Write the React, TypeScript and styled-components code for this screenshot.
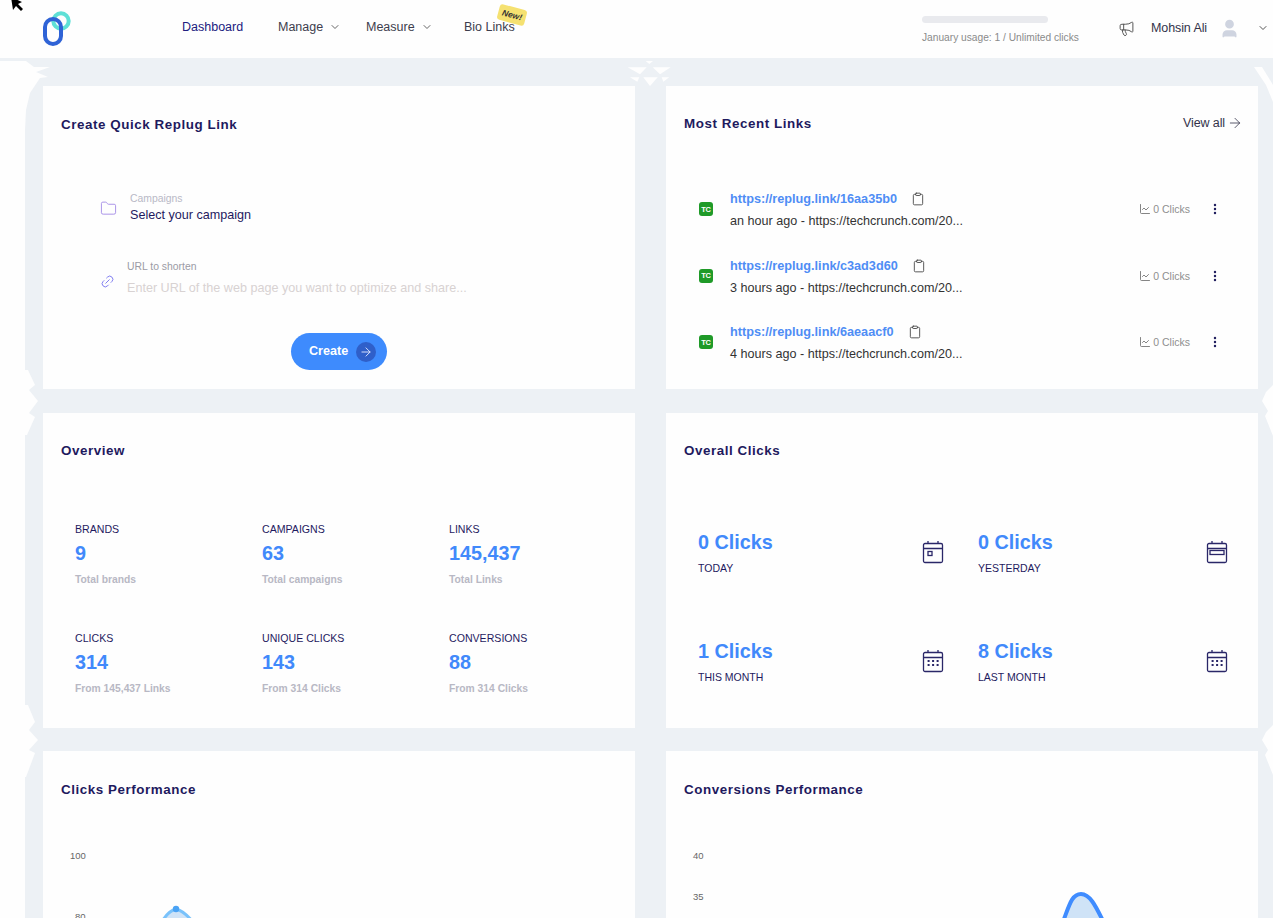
import React from "react";
import styled, { createGlobalStyle } from "styled-components";
import { ArrowRight, ChartLine, ChevronDown, Clipboard, EllipsisVertical, Folder, Link2, Megaphone, User } from "lucide-react";

const Global = createGlobalStyle`
  html, body { margin: 0; padding: 0; background: #fefefe; overflow: hidden; }
  body { font-family: "Liberation Sans", Arial, sans-serif; color: #1f1a5c; }
`;
const Page = styled.div`position: relative; height: 918px; overflow: hidden; background: #fefefe;`;
const Header = styled.header`display: flex; align-items: center; height: 58px; padding-left: 43px; padding-right: 4px; box-sizing: border-box;`;
const Logo = styled.svg`width: 28px; height: 35px; margin-top: -1px; flex: none;`;
const Nav = styled.nav`display: flex; align-items: center; margin-left: 111px; height: 100%; padding-bottom: 4px; box-sizing: border-box;`;
const NavItem = styled.a<{ $w: number; $active?: boolean }>`
  position: relative; display: flex; align-items: center; width: ${p => p.$w}px; font-size: 12.5px;
  color: ${p => (p.$active ? "#21207f" : "#3d3d4d")}; white-space: nowrap;
  svg { margin-left: 6px; color: #666; }
`;
const NewBadge = styled.span`
  position: absolute; left: 34px; top: -13px; padding: 3px 4px; border-radius: 3px; background: #f5e171; color: #333;
  font-size: 8.5px; font-weight: 700; font-style: italic; transform: rotate(15deg);
`;
const RightBlock = styled.div`display: flex; align-items: center; margin-left: auto; height: 100%; padding-bottom: 2px; box-sizing: border-box;`;
const Usage = styled.div`width: 178px; padding-top: 2px; margin-right: 18px;`;
const UsageBar = styled.div`width: 126px; height: 7px; border-radius: 4px; background: #e9eaee; margin-bottom: 9px;`;
const UsageText = styled.div`font-size: 10.2px; color: #8a8a8a; white-space: nowrap;`;
const UserName = styled.span`font-size: 12.5px; color: #33334a; margin-left: 16px; margin-right: 12px; letter-spacing: -.1px;`;
const Band = styled.div`height: 3px; background: #edf1f5;`;
const Main = styled.main`
  margin-left: 25px; padding: 25px 15px 0 18px; background: #edf1f5; height: 860px; box-sizing: border-box;
  display: grid; grid-template-columns: 592px 592px; grid-template-rows: 304px 315px 1fr; column-gap: 31px; row-gap: 23px;
`;
const Card = styled.section<{ $short?: boolean }>`
  background: #fefefe; padding: 0 18px; min-width: 0; ${p => (p.$short ? "height: 303px;" : "")}
`;
const CardHead = styled.div<{ $h?: number }>`display: flex; align-items: center; justify-content: space-between; height: ${p => p.$h ?? 76}px;`;
const Title = styled.h2`margin: 0; font-size: 13.4px; font-weight: 700; color: #1e1a5e; letter-spacing: .55px;`;
const ViewAll = styled.a`display: flex; align-items: center; font-size: 12.5px; color: #33334a; margin-right: -3px; gap: 2px; letter-spacing: -.1px;`;
const FormRow = styled.div<{ $ml: number; $gap: number; $top: number }>`
  display: flex; align-items: center; margin-left: ${p => p.$ml}px; margin-top: ${p => p.$top}px; gap: ${p => p.$gap}px;
`;
const FieldText = styled.div`display: flex; flex-direction: column;`;
const FieldLabel = styled.label<{ $dark?: boolean }>`font-size: 10.4px; line-height: 14px; color: ${p => (p.$dark ? "#9b9ba5" : "#b9b9c6")};`;
const FieldValue = styled.div`font-size: 12.6px; line-height: 18px; color: #1e1a5e;`;
const Placeholder = styled.div`font-size: 12.6px; line-height: 28px; color: #d8d2d2; white-space: nowrap;`;
const ButtonRow = styled.div`display: flex; justify-content: center; margin-top: 31px;`;
const CreateButton = styled.button`
  display: flex; align-items: center; justify-content: space-between; width: 96px; height: 37px; padding: 0 11px 2px 18px; box-sizing: border-box;
  border: 0; border-radius: 19px; background: #3e8bfd; color: #fff; font: 700 12.6px "Liberation Sans", Arial, sans-serif;
`;
const ButtonCircle = styled.span`display: flex; align-items: center; justify-content: center; width: 20px; height: 20px; border-radius: 50%; margin-top: 2px; background: #2f5fc9;`;
const LinkList = styled.div`display: flex; flex-direction: column; gap: 22.5px; padding-top: 27px;`;
const LinkRow = styled.div`display: flex; align-items: center; height: 44px; padding-left: 15px;`;
const Favicon = styled.span`
  display: flex; align-items: center; justify-content: center; width: 14px; height: 14px; border-radius: 3px; background: #1f9a28;
  color: #fff; font-size: 7.5px; font-weight: 700; flex: none; margin-right: 17px; letter-spacing: -.3px;
`;
const LinkBody = styled.div`flex: 1; min-width: 0; padding-top: 2px;`;
const LinkTop = styled.div`display: flex; align-items: center; height: 22px;`;
const LinkUrl = styled.a`font-size: 12.7px; font-weight: 700; color: #4f8df5;`;
const CopyBtn = styled.span`display: flex; margin-left: 14px; color: #444;`;
const LinkSub = styled.div`font-size: 12.6px; line-height: 22px; color: #333;`;
const ClickCount = styled.span`display: flex; align-items: center; gap: 2px; font-size: 10.5px; color: #8f8f8f; margin-right: 18px; svg { color: #666; }`;
const Kebab = styled.span`display: flex; width: 14px; margin-right: 18px; color: #22205f;`;
const StatGrid = styled.div`display: grid; grid-template-columns: repeat(3, 187px); grid-template-rows: 109px 109px; padding: 35px 0 0 14px;`;
const Stat = styled.div`display: flex; flex-direction: column;`;
const StatLabel = styled.div`font-size: 10.6px; line-height: 14px; color: #1e1a5e; text-transform: uppercase;`;
const StatValue = styled.div`font-size: 19.8px; font-weight: 700; line-height: 34px; color: #4189fb;`;
const StatSub = styled.div`font-size: 10.3px; line-height: 20px; color: #b8b8c4; font-weight: 700;`;
const ClicksGrid = styled.div`display: grid; grid-template-columns: 280px 250px; grid-template-rows: 109px 109px; padding: 39px 0 0 14px;`;
const ClickItem = styled.div`display: flex; align-items: flex-start; justify-content: space-between;`;
const ClickText = styled.div`display: flex; flex-direction: column;`;
const ClickValue = styled.div`font-size: 19.8px; font-weight: 700; line-height: 32px; color: #4189fb;`;
const ClickLabel = styled.div`font-size: 10.5px; line-height: 20px; color: #1e1a5e; text-transform: uppercase;`;
const ClickIcon = styled.svg<{ $mr: number }>`width: 22px; height: 24px; margin-top: 14px; margin-right: ${p => p.$mr}px; flex: none;`;
const Chart = styled.svg`display: block; margin: 0 -18px; width: 592px; height: 140px;`;
const Overlay = styled.svg`position: absolute; inset: 0; width: 1273px; height: 918px; pointer-events: none;`;

function CalIcon({ kind, mr }: { kind: "day" | "bar" | "grid"; mr: number }) {
  const dots = [];
  if (kind === "grid") {
    for (const y of [11, 15]) for (const x of [5.6, 10.1, 14.6]) dots.push(<rect key={x + "-" + y} x={x} y={y} width="2" height="2" fill="#2a2768" stroke="none" />);
  }
  return (
    <ClickIcon $mr={mr} viewBox="0 0 22 24" fill="none" stroke="#2a2768" strokeWidth="1.3">
      <rect x="1.5" y="3.5" width="19" height="19" rx="1.5" />
      <path d="M1.5 8.5h19M6 1v3M16 1v3" />
      {kind === "day" && <rect x="6" y="11.5" width="4" height="4" />}
      {kind === "bar" && <rect x="4" y="10.5" width="14" height="4" />}
      {dots}
    </ClickIcon>
  );
}

const links = [
  { url: "https://replug.link/16aa35b0", sub: "an hour ago - https://techcrunch.com/20..." },
  { url: "https://replug.link/c3ad3d60", sub: "3 hours ago - https://techcrunch.com/20..." },
  { url: "https://replug.link/6aeaacf0", sub: "4 hours ago - https://techcrunch.com/20..." },
];
const stats = [
  ["Brands", "9", "Total brands"], ["Campaigns", "63", "Total campaigns"], ["Links", "145,437", "Total Links"],
  ["Clicks", "314", "From 145,437 Links"], ["Unique Clicks", "143", "From 314 Clicks"], ["Conversions", "88", "From 314 Clicks"],
];
const clicks: [string, string, "day" | "bar" | "grid", number][] = [
  ["0 Clicks", "Today", "day", 34], ["0 Clicks", "Yesterday", "bar", 0],
  ["1 Clicks", "This month", "grid", 34], ["8 Clicks", "Last month", "grid", 0],
];

export default function App() {
  return (
    <Page>
      <Global />
      <Header>
        <Logo viewBox="0 0 28 35" fill="none">
          <circle cx="18" cy="10" r="7.7" stroke="#5fe0d6" strokeWidth="4" />
          <rect x="2" y="8" width="16" height="25" rx="8" stroke="#2f63d6" strokeWidth="4" />
        </Logo>
        <Nav>
          <NavItem $w={96} $active>Dashboard</NavItem>
          <NavItem $w={88}>Manage<ChevronDown size={12} /></NavItem>
          <NavItem $w={98}>Measure<ChevronDown size={12} /></NavItem>
          <NavItem $w={60}>Bio Links<NewBadge>New!</NewBadge></NavItem>
        </Nav>
        <RightBlock>
          <Usage>
            <UsageBar />
            <UsageText>January usage: 1 / Unlimited clicks</UsageText>
          </Usage>
          <Megaphone size={17} color="#555" strokeWidth={1.4} />
          <UserName>Mohsin Ali</UserName>
          <User size={21} color="#cfd4e0" fill="#cfd4e0" />
          <ChevronDown size={12} color="#555" style={{ marginLeft: 17 }} />
        </RightBlock>
      </Header>
      <Band />
      <Main>
        <Card $short>
          <CardHead><Title>Create Quick Replug Link</Title></CardHead>
          <FormRow $ml={39} $gap={13} $top={30}>
            <Folder size={17} color="#a48be6" strokeWidth={1.3} />
            <FieldText>
              <FieldLabel>Campaigns</FieldLabel>
              <FieldValue>Select your campaign</FieldValue>
            </FieldText>
          </FormRow>
          <FormRow $ml={39} $gap={12} $top={36}>
            <Link2 size={15} color="#7f7cf0" strokeWidth={1.5} style={{ transform: "rotate(-45deg)" }} />
            <FieldText>
              <FieldLabel $dark>URL to shorten</FieldLabel>
              <Placeholder>Enter URL of the web page you want to optimize and share...</Placeholder>
            </FieldText>
          </FormRow>
          <ButtonRow>
            <CreateButton>Create<ButtonCircle><ArrowRight size={14} color="#dfe6ff" strokeWidth={1.6} /></ButtonCircle></CreateButton>
          </ButtonRow>
        </Card>
        <Card $short>
          <CardHead $h={74}>
            <Title>Most Recent Links</Title>
            <ViewAll>View all<ArrowRight size={16} strokeWidth={1.2} /></ViewAll>
          </CardHead>
          <LinkList>
            {links.map(l => (
              <LinkRow key={l.url}>
                <Favicon>TC</Favicon>
                <LinkBody>
                  <LinkTop>
                    <LinkUrl>{l.url}</LinkUrl>
                    <CopyBtn><Clipboard size={14} strokeWidth={1.5} /></CopyBtn>
                  </LinkTop>
                  <LinkSub>{l.sub}</LinkSub>
                </LinkBody>
                <ClickCount><ChartLine size={12} strokeWidth={1.6} />0 Clicks</ClickCount>
                <Kebab><EllipsisVertical size={14} strokeWidth={2.2} /></Kebab>
              </LinkRow>
            ))}
          </LinkList>
        </Card>
        <Card>
          <CardHead $h={74}><Title>Overview</Title></CardHead>
          <StatGrid>
            {stats.map(s => (
              <Stat key={s[0]}>
                <StatLabel>{s[0]}</StatLabel>
                <StatValue>{s[1]}</StatValue>
                <StatSub>{s[2]}</StatSub>
              </Stat>
            ))}
          </StatGrid>
        </Card>
        <Card>
          <CardHead $h={74}><Title>Overall Clicks</Title></CardHead>
          <ClicksGrid>
            {clicks.map((c, i) => (
              <ClickItem key={i}>
                <ClickText>
                  <ClickValue>{c[0]}</ClickValue>
                  <ClickLabel>{c[1]}</ClickLabel>
                </ClickText>
                <CalIcon kind={c[2]} mr={c[3]} />
              </ClickItem>
            ))}
          </ClicksGrid>
        </Card>
        <Card>
          <CardHead><Title>Clicks Performance</Title></CardHead>
          <Chart viewBox="0 0 592 140" fontFamily="Liberation Sans, Arial, sans-serif" fontSize="9.5" fill="#666">
            <text x="27" y="32">100</text>
            <text x="32" y="93">80</text>
            <path d="M116 100Q124 84 133 82Q142 84 154 100Z" fill="#cfe3f7" stroke="#79c2fb" strokeWidth="3" />
            <circle cx="133" cy="82" r="3.2" fill="#4aa3f5" />
          </Chart>
        </Card>
        <Card>
          <CardHead><Title>Conversions Performance</Title></CardHead>
          <Chart viewBox="0 0 592 140" fontFamily="Liberation Sans, Arial, sans-serif" fontSize="9.5" fill="#666">
            <text x="27" y="32">40</text>
            <text x="27" y="73">35</text>
            <path d="M395 100C403 80 405 67 415 67C425 67 431 82 440 100Z" fill="#cfe3f7" stroke="#3f8cff" strokeWidth="4" />
          </Chart>
        </Card>
      </Main>
      <Overlay viewBox="0 0 1273 918" fill="#fefefe" aria-hidden="true">
        <polygon points="0,61 26,61 34,67 50,67 36,72 48,77 40,78 30,93 26,110 25,130 0,130" />
        <polygon points="25,370 28,370 35,385 29,390 38,401 29,413 35,417 27,435 25,435" />
        <polygon points="25,705 28,705 35,722 29,730 38,740 29,750 35,753 26,777 25,777" />
        <polygon points="1254,67 1262,67 1273,85 1273,102 1266,85" />
        <polygon points="1273,385 1266,392 1262,401 1268,411 1265,416 1273,436" />
        <polygon points="1273,725 1266,732 1262,740 1268,750 1265,755 1273,775" />
        <polygon points="645.7,61 653,61 649.3,64" />
        <polygon points="627.7,67.3 646.7,67.3 640,74.3" />
        <polygon points="652.7,67.3 670.7,67.3 660,74.3" />
        <polygon points="630,77.3 639.3,77.3 637.3,81.7" />
        <polygon points="643.3,77.3 657.7,77.3 650,86" />
        <polygon points="661.7,77.3 669.3,77.3 663.3,81.7" />
        <path d="M11 -3L13 10L16 6L21 11L23 9L18 4L22 2Z" fill="#000" />
      </Overlay>
    </Page>
  );
}
